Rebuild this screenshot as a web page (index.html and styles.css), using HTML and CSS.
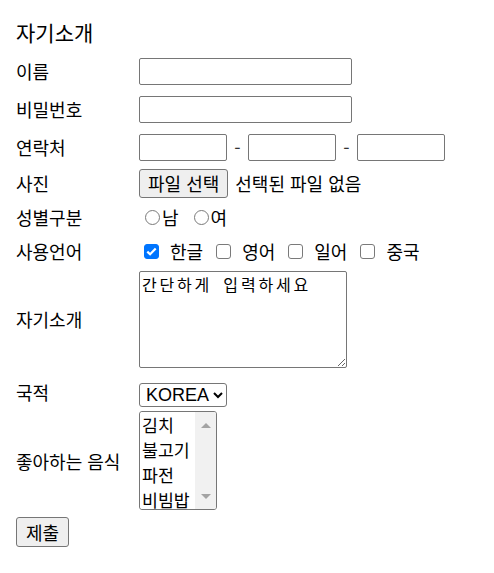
FILE: index.html
```html
<!DOCTYPE html>
<html lang="ko">

<head>
    <meta charset="utf-8">
    <meta name="viewport" content="width=device-width, initial-scale=1">
    <title>자기소개</title>
    <link rel="stylesheet" href="styles.css">
</head>

<body>
    <form class="profile">
        <h3 class="profile__title">자기소개</h3>

        <div class="row row--field">
            <label class="row__label" for="name">이름</label>
            <input class="text" id="name" type="text">
        </div>

        <div class="row row--field">
            <label class="row__label" for="pw">비밀번호</label>
            <input class="text" id="pw" type="password">
        </div>

        <div class="row row--field">
            <span class="row__label">연락처</span>
            <span class="phone">
                <input class="text text--short" type="text">
                <span class="dash">-</span>
                <input class="text text--short" type="text">
                <span class="dash">-</span>
                <input class="text text--short" type="text">
            </span>
        </div>

        <div class="row row--small">
            <span class="row__label">사진</span>
            <span class="file">
                <button class="btn" type="button">파일 선택</button>
                <span class="file__name">선택된 파일 없음</span>
            </span>
        </div>

        <div class="row row--small">
            <span class="row__label">성별구분</span>
            <span class="choices choices--radio">
                <label class="choice"><input class="tick tick--radio" type="radio" name="gender">남</label>
                <label class="choice"><input class="tick tick--radio" type="radio" name="gender">여</label>
            </span>
        </div>

        <div class="row row--small">
            <span class="row__label">사용언어</span>
            <span class="choices choices--check">
                <label class="choice"><input class="tick tick--check" type="checkbox" checked>한글</label>
                <label class="choice"><input class="tick tick--check" type="checkbox">영어</label>
                <label class="choice"><input class="tick tick--check" type="checkbox">일어</label>
                <label class="choice"><input class="tick tick--check" type="checkbox">중국</label>
            </span>
        </div>

        <div class="row row--intro">
            <label class="row__label" for="intro">자기소개</label>
            <textarea class="memo" id="intro">간단하게 입력하세요</textarea>
        </div>

        <div class="row row--nation">
            <label class="row__label row__label--top" for="nation">국적</label>
            <select class="combo" id="nation">
                <option>KOREA</option>
                <option>JAPAN</option>
                <option>CHINA</option>
            </select>
        </div>

        <div class="row row--food">
            <label class="row__label" for="food">좋아하는 음식</label>
            <span class="listbox">
                <select class="list" id="food" multiple size="4">
                    <option>김치</option>
                    <option>불고기</option>
                    <option>파전</option>
                    <option>비빔밥</option>
                </select>
                <span class="scroll" aria-hidden="true">
                    <span class="scroll__arrow scroll__arrow--up"></span>
                    <span class="scroll__arrow scroll__arrow--down"></span>
                </span>
            </span>
        </div>

        <div class="submit">
            <button class="btn btn--submit" type="submit">제출</button>
        </div>
    </form>
</body>

</html>
```

FILE: styles.css
```css
* {
    box-sizing: border-box;
}

body {
    margin: 0;
    padding: 12px 16px;
    font-family: "Noto Sans CJK KR", "Liberation Sans", sans-serif;
    font-size: 18px;
    color: #000;
    background: #fff;
}

.profile {
    display: flex;
    flex-direction: column;
}

.profile__title {
    margin: 0;
    font-size: 21px;
    font-weight: normal;
    line-height: 40px;
}

.row {
    display: flex;
    align-items: center;
}

.row--field {
    height: 38px;
}

.row--small {
    height: 34px;
}

.row--intro {
    height: 102px;
}

.row--nation {
    height: 39px;
    align-items: flex-end;
    padding-bottom: 2px;
}

.row--food {
    height: 103px;
}

.row__label {
    width: 123px;
    flex: none;
    line-height: 24px;
}

.row__label--top {
    margin-bottom: 3px;
}

.text {
    width: 213px;
    height: 27px;
    padding: 1px 2px;
    border: 1px solid #767676;
    border-radius: 2px;
    font: inherit;
}

.text--short {
    width: 88px;
}

.phone {
    display: flex;
    align-items: center;
}

.dash {
    width: 21px;
    text-align: center;
    color: #333;
}

.file {
    display: flex;
    align-items: center;
    gap: 7px;
}

.btn {
    height: 29px;
    padding: 0 8px;
    border: 1px solid #767676;
    border-radius: 3px;
    background: #efefef;
    color: #000;
    font: inherit;
    line-height: 25px;
}

.btn--submit {
    height: 30px;
    padding: 0 9px;
}

.choices {
    display: flex;
    align-items: center;
}

.choices--radio {
    gap: 9px;
}

.choices--check {
    gap: 8px;
}

.choice {
    display: flex;
    align-items: center;
}

.tick {
    appearance: none;
    -webkit-appearance: none;
    flex: none;
    width: 15px;
    height: 15px;
    border: 1.5px solid #7a7a7a;
    background: #fff;
}

.tick--radio {
    margin: 0 2px 0 6px;
    border-radius: 50%;
}

.tick--check {
    margin: 0 11px 0 5px;
    border-radius: 3px;
}

.tick--check:checked {
    border-color: #0075ff;
    background: #0075ff url("data:image/svg+xml;utf8,<svg xmlns='http://www.w3.org/2000/svg' width='15' height='15' viewBox='0 0 15 15'><path d='M3.3 7.6L6.1 10.3L11.7 4.6' fill='none' stroke='white' stroke-width='2.2'/></svg>") center / 15px 15px no-repeat;
}

.memo {
    width: 208px;
    height: 97px;
    margin: 0;
    padding: 2px;
    border: 1px solid #767676;
    border-radius: 2px;
    font-family: "Noto Sans CJK KR", monospace;
    font-size: 16px;
    letter-spacing: 2.8px;
    word-spacing: 4px;
    line-height: 20px;
    resize: both;
}

.combo {
    width: 88px;
    height: 24px;
    padding: 0 0 0 2px;
    border: 1px solid #767676;
    border-radius: 3px;
    background: #fff;
    font-family: "Liberation Sans", sans-serif;
    font-size: 18px;
}

.listbox {
    display: flex;
    width: 78px;
    height: 99px;
    border: 1px solid #767676;
    border-radius: 3px;
    overflow: hidden;
}

.list {
    flex: 1;
    min-width: 0;
    height: 97px;
    padding: 0;
    border: 0;
    outline: 0;
    font-family: "Noto Sans CJK KR", sans-serif;
    font-size: 17.3px;
    overflow: hidden;
}

.list option {
    padding: 0 2px;
}

.scroll {
    display: flex;
    flex-direction: column;
    justify-content: space-between;
    align-items: center;
    flex: none;
    width: 21px;
    padding: 11px 0 10px;
    background: #f1f1f1;
}

.scroll__arrow {
    width: 0;
    height: 0;
    border-left: 5px solid transparent;
    border-right: 5px solid transparent;
}

.scroll__arrow--up {
    border-bottom: 5px solid #a3a3a3;
}

.scroll__arrow--down {
    border-top: 5px solid #a3a3a3;
}

.submit {
    margin-top: 5px;
}
```
